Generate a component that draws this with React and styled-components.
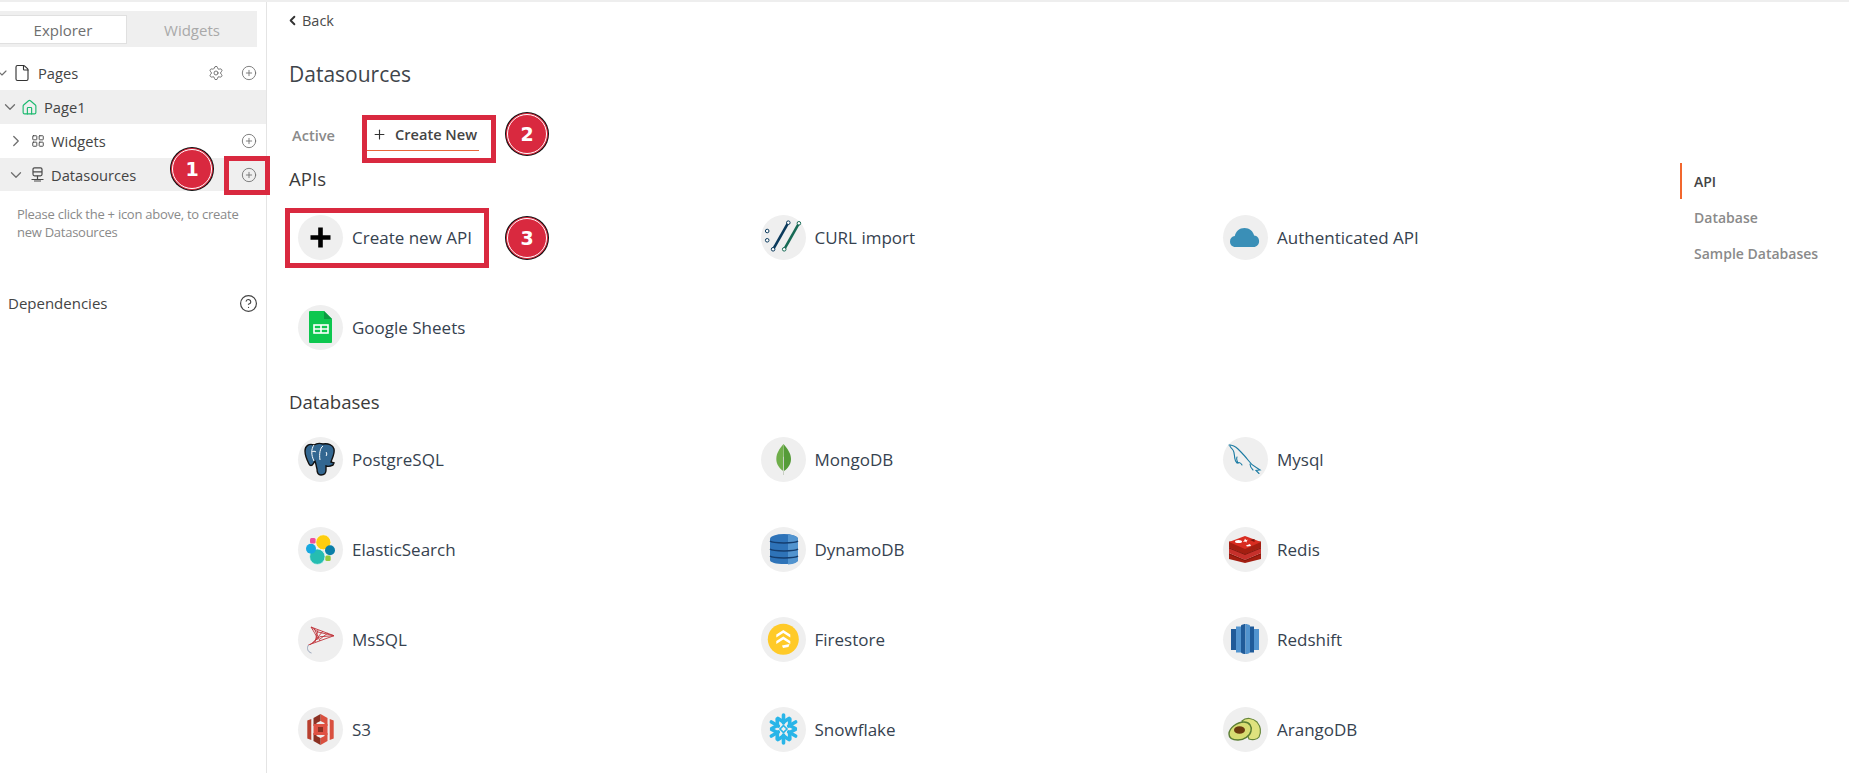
import React from 'react';
import styled, { createGlobalStyle } from 'styled-components';
import { ChevronDown, ChevronRight, ChevronLeft, File, Home, LayoutGrid, Settings, CirclePlus, CircleHelp, Plus } from 'lucide-react';

const Global = createGlobalStyle`
  html, body { margin: 0; padding: 0; background: #fff; }
  body { font-family: "Open Sans", "Noto Sans", sans-serif; overflow: hidden; }
  * { box-sizing: border-box; }
`;

const Page = styled.div`
  position: relative; display: flex; width: 1849px; height: 773px; overflow: hidden;
  border-top: 2px solid #eeeeee;
`;
const Sidebar = styled.aside`
  width: 267px; flex: none; border-right: 1px solid #e4e4e4; padding-top: 9px; color: #4b4b4b;
`;
const TabBand = styled.div`
  display: flex; width: 257px; height: 36px; background: #efefef; padding: 4px 0 3px; margin-bottom: 9px;
`;
const SideTab = styled.div`
  width: ${p => p.$active ? '127px' : '130px'}; display: flex; align-items: center; justify-content: center;
  font-size: 15px; color: ${p => p.$active ? '#6f6f6f' : '#a9a9a9'};
  background: ${p => p.$active ? '#fff' : 'transparent'};
  border: ${p => p.$active ? '1px solid #e0e0e0' : 'none'}; border-left: none;
`;
const TreeRow = styled.div`
  display: flex; align-items: center; height: ${p => p.$h || 34}px; padding-left: ${p => p.$indent}px; padding-right: 9px;
  background: ${p => p.$shaded ? '#efefef' : 'transparent'}; font-size: 14.7px; color: #444; gap: ${p => p.$gap || 6}px;
`;
const Grow = styled.span` flex: 1; `;
const RowActions = styled.span` display: flex; align-items: center; gap: 17px; color: #6d6d6d; `;
const Chevron = styled.span` display: flex; color: #6f6f6f; margin-right: ${p => p.$mr || 0}px; margin-left: ${p => p.$ml || 0}px; `;
const HelpText = styled.p`
  margin: 14px 0 0; padding-left: 17px; width: 262px; font-size: 13px; line-height: 18px; color: #8a8a8a; letter-spacing: -0.02em;
`;
const DependencyRow = styled.div`
  display: flex; align-items: center; justify-content: space-between; margin-top: 45px;
  padding: 0 8px 0 8px; height: 34px; font-size: 15px; color: #444;
`;
const Main = styled.main` width: 1413px; flex: none; padding-left: 22px; `;
const BackLink = styled.div`
  display: flex; align-items: center; gap: 2px; height: 36px; font-size: 14.5px; color: #4a4a4a;
  svg { margin-left: -4px; }
`;
const Title = styled.h1`
  margin: 16px 0 0; height: 42px; line-height: 40px; font-size: 21px; font-weight: 400; color: #3f454b;
`;
const Tabs = styled.div` display: flex; align-items: flex-end; height: 42px; margin-top: 13px; padding-left: 3px; `;
const TabItem = styled.div`
  display: flex; align-items: center; height: 39px; font-size: 14.6px; font-weight: 600; padding-top: 6px;
  color: ${p => p.$active ? '#444' : '#8a8a8a'};
  ${p => p.$active && `
    margin-left: 31px; width: 113px; padding-left: 6px; gap: 8px;
    border-bottom: 1px solid #e8663a;
  `}
`;
const SectionTitle = styled.h2`
  margin: 0; height: ${p => p.$h}px; padding-top: ${p => p.$pad}px; line-height: 24px; font-size: 18.6px; font-weight: 500; color: #3b3b3b;
`;
const Grid = styled.div` display: grid; grid-template-columns: repeat(3, 462.5px); grid-auto-rows: 90px; `;
const Item = styled.div` display: flex; align-items: center; gap: 9px; padding-left: 9px; `;
const Circle = styled.span`
  width: 45px; height: 45px; flex: none; border-radius: 50%; background: #efefef; display: block;
  svg { display: block; }
`;
const ItemLabel = styled.span` font-size: 17px; color: #36424f; `;
const SideNav = styled.nav` width: 169px; flex: none; margin-top: 161px; height: 108px; align-self: flex-start; `;
const NavItem = styled.div`
  height: 36px; display: flex; align-items: center; padding-left: 12px; font-size: 14px; font-weight: 600;
  color: ${p => p.$active ? '#444' : '#8a8a8a'};
  border-left: 2px solid ${p => p.$active ? '#f2672e' : 'transparent'};
`;
const Highlight = styled.div`
  position: absolute; left: ${p => p.$x}px; top: ${p => p.$y}px; width: ${p => p.$w}px; height: ${p => p.$h}px;
  border: 5px solid #d9293f; pointer-events: none;
`;
const Badge = styled.div`
  position: absolute; left: ${p => p.$x - 21}px; top: ${p => p.$y - 21}px; width: 42px; height: 42px; border-radius: 50%;
  background: #d9293f; border: 1px solid #d9293f; box-shadow: 0 0 0 1px #111;
  outline: 1px solid #fff; outline-offset: -2px;
  display: flex; align-items: center; justify-content: center;
  font-family: "DejaVu Sans", sans-serif; font-weight: 700; font-size: 19px; color: #fff;
`;

const Svg = ({ children }) => <svg width="45" height="45" viewBox="0 0 45 45" fill="none">{children}</svg>;

const icons = {
  plus: <Svg><path d="M12.5 22.5h20M22.5 12.5v20" stroke="#000" strokeWidth="4.6" /></Svg>,
  curl: <Svg>
    <path d="M27.3 7.7 12.1 34.3" stroke="#0b3a5c" strokeWidth="2.6" />
    <path d="M37.9 8.3 23.2 34.3" stroke="#176a55" strokeWidth="2.6" />
    <g fill="#fff" strokeWidth="1">
      <circle cx="6.2" cy="16" r="1.8" stroke="#0b3a5c" /><circle cx="6.2" cy="25.3" r="1.8" stroke="#0b3a5c" />
      <circle cx="27.3" cy="7.7" r="1.8" stroke="#0b3a5c" /><circle cx="12.1" cy="34.3" r="1.8" stroke="#0b3a5c" />
      <circle cx="37.9" cy="8.3" r="1.8" stroke="#176a55" /><circle cx="23.2" cy="34.3" r="1.8" stroke="#176a55" />
    </g>
  </Svg>,
  cloud: <Svg><path d="M12.5 32C9 32 7 29.5 7 26.5c0-3 2-5 4.8-5.4C12.5 16.5 16.5 13 21.5 13c5 0 8.8 3.4 9.6 7.6 3 .3 5 2.6 5 5.6 0 3.2-2.3 5.8-5.6 5.8z" fill="#3a8fb7" /></Svg>,
  sheets: <Svg>
    <path d="M12 6h14l8 8v23a1 1 0 0 1-1 1H12a1 1 0 0 1-1-1V7a1 1 0 0 1 1-1z" fill="#0dc74f" />
    <path d="M26 6l8 8h-8z" fill="#0a9a40" />
    <rect x="16" y="20" width="14" height="8" stroke="#fff" strokeWidth="1.6" fill="#0dc74f" />
    <path d="M23 20v8M16 24h14" stroke="#fff" strokeWidth="1.6" />
  </Svg>,
  postgres: <Svg>
    <path d="M16 8c-5-2-9 1-9 6 0 4 2 9 4 13 1 2 3 2 4 0l2-3c1 2 1 5 2 8 0 3 1 6 4 6s5-2 5-5v-4c3 1 5 0 7-1l1-2-3-1c1-4 4-8 3-13-1-4-6-6-11-5-3-1-6-1-9 1z" fill="#336791" stroke="#111" strokeWidth="1.4" />
    <path d="M16 8c-3 4-3 10 0 16M25 9c-3 2-4 8-3 14M14 15c1-1 3-1 4 0M28 15c1 1 1 3 0 4" stroke="#fff" strokeWidth="1" />
  </Svg>,
  mongo: <Svg>
    <path d="M22.5 7c4 5 7.5 9 7.5 15s-4 10-7 12z" fill="#559b38" />
    <path d="M22.5 7c-4 5-7.2 9-7.2 15s4 10 7 12z" fill="#6fae4a" />
    <path d="M22.5 20v18" stroke="#c8cfc4" strokeWidth="1" />
  </Svg>,
  mysql: <Svg>
    <path d="M6 8c3 0 6 1 9 4 4 4 7 7 10 11 2 3 5 6 9 8l3 2-4 .5 3 3M7 8c-1 2 2 3 3 5 2 3 1 6 2 9 0 1 1 3 2 4M14 20c-1 2 0 4 1 6 1-1 3 0 4 2M27 27c0 2 1 4 3 6" stroke="#1b7ba3" strokeWidth="1.1" fill="none" strokeLinecap="round" />
  </Svg>,
  elastic: <Svg>
    <circle cx="25.3" cy="15.3" r="7.5" fill="#fdcd0e" stroke="#fff" strokeWidth=".6" />
    <circle cx="19.3" cy="29.7" r="7.7" fill="#26bdb1" stroke="#fff" strokeWidth=".6" />
    <circle cx="13" cy="21.7" r="5" fill="#18a8e0" />
    <rect x="12" y="11" width="5.6" height="5.6" rx="1.5" fill="#ee4f9c" />
    <circle cx="32" cy="23.3" r="5" fill="#0a7fa8" />
    <rect x="27.3" y="28.5" width="5.4" height="5.4" rx="1.5" fill="#93c83e" />
  </Svg>,
  mssql: <Svg>
    <path d="M13 10 36 18.7 10.3 28M13 10c3 5 6 9 6 13M16 11 22 24M20 13 17 25M25 14 15 26M30 16 22 22M13 10l7 5 16 3.7-14 1-10 8" stroke="#c0333a" strokeWidth=".9" fill="none" />
    <path d="M10.5 28c-2 3-1 7 3 8" stroke="#8f9cb3" strokeWidth=".9" fill="none" />
  </Svg>,
  s3: <Svg>
    <path d="M9.3 13.5l4-1.5v21l-4-1.5z" fill="#b8402f" />
    <path d="M35.7 13.5l-4-1.5v21l4-1.5z" fill="#d9503f" />
    <path d="M22.5 7l7 4v8h-3v-3l-4-2z" fill="#d9503f" />
    <path d="M22.5 7l-7 4v8h3v-3l4-2z" fill="#8c3123" />
    <path d="M22.5 38l7-4v-8h-3v3l-4 2z" fill="#d9503f" />
    <path d="M22.5 38l-7-4v-8h3v3l4 2z" fill="#8c3123" />
    <rect x="15.5" y="17" width="14" height="11" fill="#e05243" />
    <rect x="20" y="20" width="5" height="5" fill="#8c3123" />
  </Svg>,
  dynamo: <Svg>
    <ellipse cx="23" cy="12" rx="14" ry="5" fill="#2e73b8" />
    <path d="M9 12h28v21c0 2.5-6 4-14 4s-14-1.5-14-4z" fill="#2e73b8" />
    <path d="M27 7.5c6 .5 10 2.2 10 4.5v21c0 2.3-4 4-10 4.5z" fill="#5294cf" />
    <path d="M9 14c3 2.5 25 2.5 28 0M9 22c3 2.5 25 2.5 28 0M9 29c3 2.5 25 2.5 28 0" stroke="#153e6f" strokeWidth="1.5" />
  </Svg>,
  redis: <Svg>
    <path d="M6 26l16 7 16-7v6l-16 4-16-4z" fill="#a41e11" />
    <path d="M6 20l16 7 16-7v6l-16 7-16-7z" fill="#c6302b" />
    <path d="M6 14.5v6l16 7 16-7v-6z" fill="#a41e11" />
    <path d="M22 9 38 15 22 22 6 15z" fill="#d82c20" />
    <path d="M6 21l16 6.5L38 21M6 27l16 6.5L38 27" stroke="#7a150b" strokeWidth=".8" />
    <ellipse cx="15.5" cy="14.5" rx="3.5" ry="1.6" fill="#fff" />
    <path d="M22 11.5l1 1.5 2-.3-1.5 1.3.5 1.5-2-1-2 .5 1.3-1.4z" fill="#fff" />
    <path d="M23 18.5l4-1.5 1 2-4 .5z" fill="#fff" />
    <path d="M27 13l4.5-1 0 3z" fill="#7a150b" />
  </Svg>,
  firestore: <Svg>
    <circle cx="22.3" cy="22.3" r="15.5" fill="#ffca28" />
    <path d="M22.3 13l7 4.5v3l-7-4.5-7 4.5v-3zM22.3 19.5l7 4.5v3l-7-4.5-7 4.5v-3z" fill="#fff" />
    <path d="M21 28.5l7.5-1.5-1 3-5.5 1z" fill="#fff" />
  </Svg>,
  redshift: <Svg>
    <rect x="8" y="12" width="5" height="21" fill="#205b99" />
    <rect x="13" y="9.5" width="5" height="26" fill="#5294cf" />
    <path d="M18 8.5c1-1 3-1.5 4.5-1.5V37c-1.5 0-3.5-.5-4.5-1.5z" fill="#205b99" />
    <path d="M22.5 7c1.5 0 3.5.5 4.5 1.5v27c-1 1-3 1.5-4.5 1.5z" fill="#5294cf" />
    <rect x="27" y="9.5" width="4" height="26" fill="#205b99" />
    <rect x="31" y="12" width="5" height="21" fill="#5294cf" />
  </Svg>,
  snowflake: <Svg>
    <g stroke="#29b5e8" strokeWidth="3.6" strokeLinecap="round" fill="none">
      {[0, 60, 120, 180, 240, 300].map(a => (
        <g key={a} transform={`rotate(${a} 22.5 22)`}>
          <path d="M22.5 16V8" /><path d="M22.5 15 28 11.5" /><path d="M22.5 15 17 11.5" />
        </g>
      ))}
    </g>
    <path d="M22.5 18.5l3.5 3.5-3.5 3.5-3.5-3.5z" stroke="#29b5e8" strokeWidth="1.6" />
  </Svg>,
  arango: <Svg>
    <path d="M19 14c4-4 11-3 15 1 4 5 4 11 2 15-2 3-7 3-10 2z" fill="#dfe27e" stroke="#66863a" strokeWidth="1.2" />
    <path d="M6 27c0-6 8-12 15-12 6 0 8 5 7 9-1 5-7 9-13 9-5 0-9-2-9-6z" fill="#d7dc72" stroke="#5a7d33" strokeWidth="1.4" />
    <ellipse cx="16.5" cy="23" rx="5.5" ry="3.8" fill="#6b3a0f" />
  </Svg>,
};

const DatasourceIcon = () => (
  <svg width="15" height="15" viewBox="0 0 15 15" fill="none" stroke="#4a4a4a" strokeWidth="1.2">
    <rect x="3" y=".8" width="9" height="8" rx="1.5" />
    <path d="M3 4.8h9M7.5 8.8v3.5M1.5 12.5h12M4 14h7" />
  </svg>
);

const apis = [['plus', 'Create new API'], ['curl', 'CURL import'], ['cloud', 'Authenticated API'], ['sheets', 'Google Sheets']];
const dbs = [
  ['postgres', 'PostgreSQL'], ['mongo', 'MongoDB'], ['mysql', 'Mysql'],
  ['elastic', 'ElasticSearch'], ['dynamo', 'DynamoDB'], ['redis', 'Redis'],
  ['mssql', 'MsSQL'], ['firestore', 'Firestore'], ['redshift', 'Redshift'],
  ['s3', 'S3'], ['snowflake', 'Snowflake'], ['arango', 'ArangoDB'],
];

const Cards = ({ items }) => (
  <Grid>
    {items.map(([icon, label]) => (
      <Item key={label}><Circle>{icons[icon]}</Circle><ItemLabel>{label}</ItemLabel></Item>
    ))}
  </Grid>
);

export default function App() {
  return (
    <Page>
      <Global />
      <Sidebar>
        <TabBand><SideTab $active>Explorer</SideTab><SideTab>Widgets</SideTab></TabBand>
        <TreeRow $indent={0} $gap={7}>
          <Chevron $ml={-6} $mr={-4}><ChevronDown size={16} strokeWidth={1.7} /></Chevron>
          <File size={18} strokeWidth={1.5} color="#333" />
          <span>Pages</span>
          <Grow />
          <RowActions><Settings size={16} strokeWidth={1.4} /><CirclePlus size={16} strokeWidth={1.3} /></RowActions>
        </TreeRow>
        <TreeRow $shaded $indent={1} $gap={6}>
          <Chevron $mr={-4}><ChevronDown size={18} strokeWidth={1.7} /></Chevron>
          <Home size={17} strokeWidth={1.6} color="#1bb96f" />
          <span>Page1</span>
        </TreeRow>
        <TreeRow $indent={7} $gap={6}>
          <Chevron><ChevronRight size={18} strokeWidth={1.7} /></Chevron>
          <LayoutGrid size={14} strokeWidth={1.6} color="#444" />
          <span>Widgets</span>
          <Grow />
          <RowActions><CirclePlus size={16} strokeWidth={1.3} /></RowActions>
        </TreeRow>
        <TreeRow $shaded $h={33} $indent={7} $gap={6}>
          <Chevron $mr={-1}><ChevronDown size={18} strokeWidth={1.7} /></Chevron>
          <DatasourceIcon />
          <span>Datasources</span>
          <Grow />
          <RowActions><CirclePlus size={16} strokeWidth={1.3} /></RowActions>
        </TreeRow>
        <HelpText>Please click the + icon above, to create<br />new Datasources</HelpText>
        <DependencyRow><span>Dependencies</span><CircleHelp size={19} strokeWidth={1.5} color="#444" /></DependencyRow>
      </Sidebar>
      <Main>
        <BackLink><ChevronLeft size={15} strokeWidth={3} color="#333" /><span>Back</span></BackLink>
        <Title>Datasources</Title>
        <Tabs>
          <TabItem>Active</TabItem>
          <TabItem $active><Plus size={15} strokeWidth={1.8} color="#333" /><span>Create New</span></TabItem>
        </Tabs>
        <SectionTitle $h={41} $pad={16}>APIs</SectionTitle>
        <Cards items={apis} />
        <SectionTitle $h={42} $pad={18}>Databases</SectionTitle>
        <Cards items={dbs} />
      </Main>
      <SideNav>
        <NavItem $active>API</NavItem>
        <NavItem>Database</NavItem>
        <NavItem>Sample Databases</NavItem>
      </SideNav>
      <Highlight $x={224} $y={154} $w={46} $h={39} />
      <Badge $x={192} $y={167}>1</Badge>
      <Highlight $x={362} $y={113} $w={134} $h={48} />
      <Badge $x={527} $y={132}>2</Badge>
      <Highlight $x={285} $y={206} $w={204} $h={60} />
      <Badge $x={527} $y={236}>3</Badge>
    </Page>
  );
}
